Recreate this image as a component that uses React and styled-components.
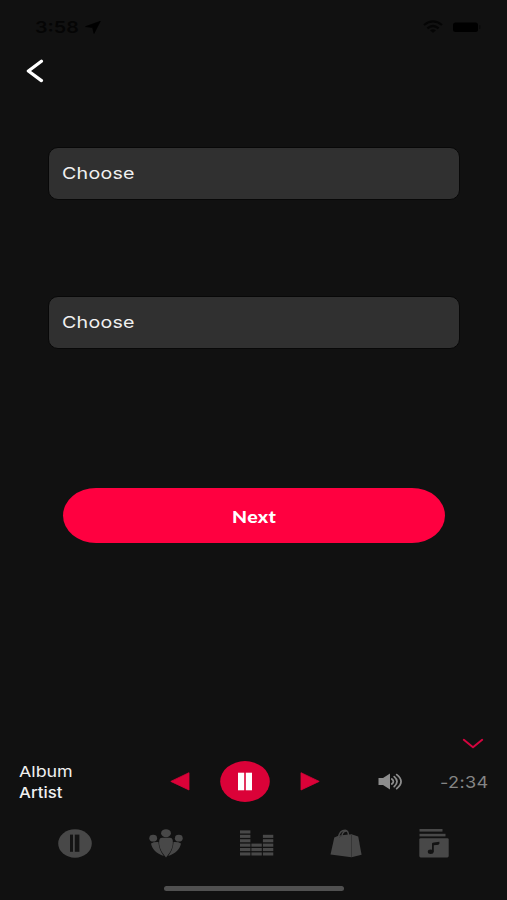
import styled, { createGlobalStyle } from "styled-components";

const GlobalStyle = createGlobalStyle`
  * {
    box-sizing: border-box;
  }

  body {
    margin: 0;
    background-color: #111111;
  }
`;

const fields = ["Choose", "Choose"];

const BackIcon = () => (
  <svg width="18" height="24" viewBox="0 0 18 24" fill="none">
    <path d="M15.4 2.2 L2.4 12 L15.4 21.6" stroke="#fff" strokeWidth="3.3" strokeLinecap="round" strokeLinejoin="round" />
  </svg>
);

const LocationIcon = () => (
  <svg width="16" height="13" viewBox="0 0 16 13">
    <path d="M15.3 0.3 L0.5 5.6 L7.6 6.6 L9 12.4 Z" fill="#000" stroke="#000" strokeWidth="0.7" strokeLinejoin="round" />
  </svg>
);

const WifiIcon = () => (
  <svg width="20" height="14" viewBox="0 0 20 14" fill="none" stroke="#050505" strokeWidth="2.2">
    <path d="M1 5 Q10 -2.4 19 5" />
    <path d="M4.4 8.4 Q10 3.6 15.6 8.4" />
    <path d="M7 10.4 Q10 8 13 10.4 L10 12.8 Z" fill="#050505" stroke="none" />
  </svg>
);

const BatteryIcon = () => (
  <svg width="28" height="12" viewBox="0 0 28 12">
    <rect x="0" y="1.5" width="25" height="9.5" rx="2.5" fill="#000" />
    <rect x="26" y="4" width="1.5" height="4" rx="0.7" fill="#0a0a0a" />
  </svg>
);

const ChevronDownIcon = () => (
  <svg width="22" height="11" viewBox="0 0 22 11" fill="none">
    <path d="M1.8 1.8 L11 9.2 L20.2 1.8" stroke="#d4053f" strokeWidth="2" strokeLinecap="round" strokeLinejoin="round" />
  </svg>
);

const PreviousIcon = () => (
  <svg width="20" height="19" viewBox="0 0 20 19">
    <path d="M19 0.7 V18 L0.8 9.4 Z" fill="#db0238" stroke="#db0238" strokeWidth="0.8" strokeLinejoin="round" />
  </svg>
);

const NextIcon = () => (
  <svg width="20" height="19" viewBox="0 0 20 19">
    <path d="M1 0.7 V18 L19.2 9.4 Z" fill="#db0238" stroke="#db0238" strokeWidth="0.8" strokeLinejoin="round" />
  </svg>
);

const PauseIcon = () => (
  <svg width="50" height="41" viewBox="0 0 50 41">
    <ellipse cx="25" cy="20.5" rx="24.8" ry="20.4" fill="#db0238" />
    <rect x="18" y="11.7" width="6.2" height="17.6" fill="#fff" />
    <rect x="25.8" y="11.7" width="6.2" height="17.6" fill="#fff" />
  </svg>
);

const VolumeIcon = () => (
  <svg width="25" height="18" viewBox="0 0 25 18" fill="none" stroke="#8d8d8d" strokeWidth="1.8" strokeLinecap="round">
    <path d="M0.5 5 H5 L12 0.4 V16.6 L5 12 H0.5 Z" fill="#8d8d8d" stroke="none" />
    <path d="M13.8 6 Q17 8.4 13.8 11" />
    <path d="M16.2 3.6 Q21.8 8.4 16.2 13.6" />
    <path d="M18.7 1.6 Q27.4 8.4 18.7 15.6" />
  </svg>
);

const PlayingTabIcon = () => (
  <svg width="34" height="29" viewBox="0 0 34 29">
    <ellipse cx="17" cy="14.5" rx="16.8" ry="14.2" fill="#484848" />
    <rect x="12" y="5.6" width="3" height="17.2" fill="#141414" />
    <rect x="16.8" y="5.6" width="4.6" height="17.2" fill="#141414" />
  </svg>
);

const PeopleTabIcon = () => (
  <svg width="34" height="29" viewBox="0 0 34 29" fill="#484848">
    <ellipse cx="17" cy="4.2" rx="4.9" ry="4" />
    <ellipse cx="4.2" cy="9.2" rx="3.9" ry="3.4" />
    <ellipse cx="29.8" cy="9.2" rx="3.9" ry="3.4" />
    <path d="M17 28.4 C12 23 9.4 17.5 10.3 11 Q10.8 8.8 13 8.8 H21 Q23.2 8.8 23.7 11 C24.6 17.5 22 23 17 28.4 Z" />
    <path d="M2 14.4 Q5 12.6 9.4 13 C9.8 18.4 11.6 22.8 14.8 27 C7.4 24.5 3 20 2 14.4 Z" />
    <path d="M32 14.4 Q29 12.6 24.6 13 C24.2 18.4 22.4 22.8 19.2 27 C26.6 24.5 31 20 32 14.4 Z" />
  </svg>
);

const equalizerColumns = [
  { x: 0, bars: 6 },
  { x: 11.4, bars: 3 },
  { x: 22.9, bars: 5 },
];

const EqualizerTabIcon = () => (
  <svg width="34" height="29" viewBox="0 0 34 29" fill="#484848">
    {equalizerColumns.map((column) =>
      Array.from({ length: column.bars }, (_, i) => (
        <rect key={`${column.x}-${i}`} x={column.x} y={23.4 - i * 4.4} width="10.4" height="3.1" />
      ))
    )}
  </svg>
);

const BagTabIcon = () => (
  <svg width="32" height="29" viewBox="0 0 32 29">
    <path d="M4.3 8.4 L9 6.4 L21.5 5.2 L28.2 7.6 L31.6 25.8 L21.5 28.3 L0.5 25.6 Z" fill="#484848" />
    <path d="M8.2 9 C9 4 12 1.2 15.2 1.2 C17.5 1.2 18.4 3 18.6 6.8 M11.8 6.8 C12.5 3.2 15.3 1.2 17.5 2.4" fill="none" stroke="#484848" strokeWidth="1.4" />
    <path d="M9.6 8.6 C10.2 6.9 11.2 6.2 12.2 7.4" fill="none" stroke="#333" strokeWidth="0.7" />
    <path d="M21.5 6 V28" stroke="#363636" strokeWidth="1" />
  </svg>
);

const LibraryTabIcon = () => (
  <svg width="30" height="29" viewBox="0 0 30 29" fill="#484848">
    <rect x="0.5" y="0" width="23" height="2.6" />
    <rect x="0.5" y="4.8" width="26" height="2.6" />
    <rect x="0.3" y="9.2" width="29.4" height="19.2" rx="1.4" />
    <g fill="#121212">
      <ellipse cx="11.7" cy="22.8" rx="2.9" ry="2.2" />
      <path d="M13 14.6 Q13.4 13.5 15 13.5 L20.4 12.8 V14.8 Q19.6 16.4 17 16 L14.8 16.2 V22.8 H13 Z" />
    </g>
  </svg>
);

const App = () => {
  return (
    <Screen>
      <GlobalStyle />
      <StatusBar>
        <StatusGroup>
          <Clock>3:58</Clock>
          <LocationIcon />
        </StatusGroup>
        <StatusGroup>
          <WifiIcon />
          <BatteryIcon />
        </StatusGroup>
      </StatusBar>
      <BackButton aria-label="Back">
        <BackIcon />
      </BackButton>
      <Form>
        {fields.map((label, i) => (
          <Field key={i}>
            <Wide $stretch={1.19}>{label}</Wide>
          </Field>
        ))}
      </Form>
      <NextButton>
        <NextLabel>Next</NextLabel>
      </NextButton>
      <CollapseRow>
        <ChevronDownIcon />
      </CollapseRow>
      <Player>
        <Track>
          <Wide $stretch={1.19}>Album</Wide>
          <Wide $stretch={1.12} $weight={500}>Artist</Wide>
        </Track>
        <Controls>
          <PreviousIcon />
          <PauseIcon />
          <NextIcon />
        </Controls>
        <Volume>
          <VolumeIcon />
        </Volume>
        <Remaining>-2:34</Remaining>
      </Player>
      <Tabs>
        <PlayingTabIcon />
        <PeopleTabIcon />
        <EqualizerTabIcon />
        <BagTabIcon />
        <LibraryTabIcon />
      </Tabs>
      <HomeIndicator />
    </Screen>
  );
};

const Screen = styled.main`
  display: flex;
  flex-direction: column;
  width: 507px;
  height: 900px;
  overflow: hidden;
  background-color: #111111;
  color: #f0f0f0;
  font-family: Inter, "Liberation Sans", sans-serif;

  svg {
    display: block;
    flex-shrink: 0;
  }
`;

const StatusBar = styled.header`
  display: flex;
  justify-content: space-between;
  align-items: center;
  height: 54px;
  padding: 0 26px 0 35px;
`;

const StatusGroup = styled.div`
  display: flex;
  align-items: center;
  gap: 10px;
`;

const Clock = styled.span`
  width: 40px;
  font-size: 16px;
  font-weight: 600;
  line-height: 20px;
  color: #050505;
  transform: scaleX(1.23);
  transform-origin: left;
`;

const BackButton = styled.button`
  width: 18px;
  height: 24px;
  margin: 5px 0 0 26px;
  padding: 0;
  border: none;
  background: none;
`;

const Wide = styled.span`
  font-weight: ${(props) => props.$weight || 400};
  transform: scaleX(${(props) => props.$stretch});
  transform-origin: left;
`;

const Form = styled.div`
  display: flex;
  flex-direction: column;
  gap: 96px;
  margin: 64px 47px 0 48px;
`;

const Field = styled.div`
  display: flex;
  align-items: center;
  height: 53px;
  padding: 0 0 2px 13px;
  border: 1px solid #080808;
  border-radius: 10px;
  background-color: #303030;
  font-size: 16.5px;
  letter-spacing: 0.2px;
`;

const NextButton = styled.button`
  display: flex;
  flex-shrink: 0;
  justify-content: center;
  align-items: center;
  width: 382px;
  height: 55px;
  margin: 139px 0 0 63px;
  padding: 1px 0 0;
  border: none;
  border-radius: 33px / 27.5px;
  background-color: #ff0040;
  color: #fff;
`;

const NextLabel = styled.span`
  font-family: Lato, sans-serif;
  font-size: 16px;
  font-weight: 900;
  letter-spacing: 0.3px;
  transform: scaleX(1.22);
`;

const CollapseRow = styled.div`
  display: flex;
  justify-content: flex-end;
  margin-top: 195px;
  padding-right: 23px;
`;

const Player = styled.section`
  display: flex;
  align-items: center;
  height: 41px;
  margin-top: 12px;
`;

const Track = styled.div`
  display: flex;
  flex-direction: column;
  width: 151px;
  margin-left: 19px;
  font-size: 15px;
  line-height: 21px;
`;

const Controls = styled.div`
  display: flex;
  justify-content: space-between;
  align-items: center;
  width: 150px;
`;

const Volume = styled.div`
  margin-left: 58px;
`;

const Remaining = styled.span`
  margin-left: 37px;
  color: #858585;
  font-size: 16px;
  letter-spacing: 0.3px;
  transform: scaleX(1.13);
  transform-origin: left;
`;

const Tabs = styled.nav`
  display: flex;
  justify-content: space-between;
  margin-top: 27px;
  padding: 0 58px;
`;

const HomeIndicator = styled.div`
  width: 180px;
  height: 5px;
  margin: 28px 0 0 164px;
  border-radius: 3px;
  background-color: #505050;
`;

export default App;
